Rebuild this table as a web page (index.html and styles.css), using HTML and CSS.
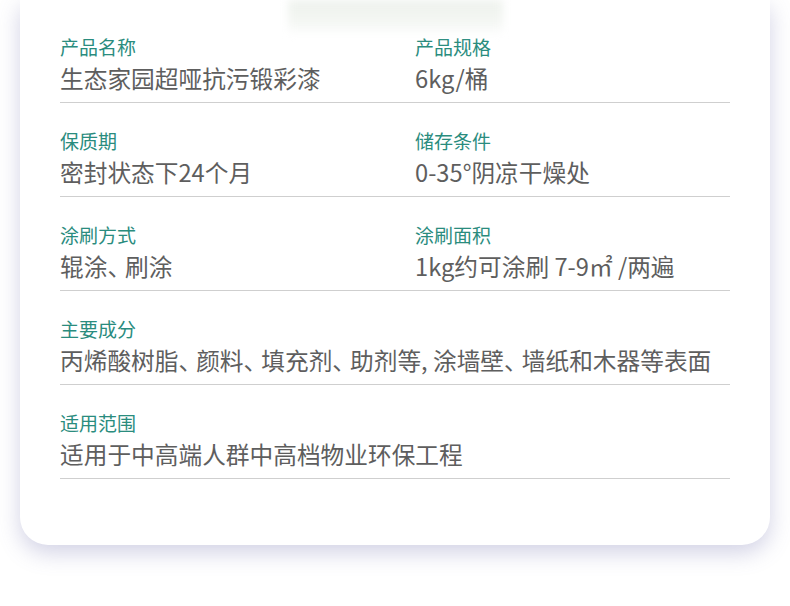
FILE: index.html
```html
<!DOCTYPE html>
<html lang="zh-CN">
<head>
<meta charset="utf-8">
<title>产品参数</title>
<link rel="stylesheet" href="styles.css">
</head>
<body>
<div class="page">
  <div class="card">
    <div class="hero"><div class="hero-img"></div></div>
    <div class="specs">
      <div class="row">
        <div class="cell">
          <div class="label">产品名称</div>
          <div class="value">生态家园超哑抗污锻彩漆</div>
        </div>
        <div class="cell">
          <div class="label">产品规格</div>
          <div class="value">6kg/桶</div>
        </div>
      </div>
      <div class="row">
        <div class="cell">
          <div class="label">保质期</div>
          <div class="value">密封状态下24个月</div>
        </div>
        <div class="cell">
          <div class="label">储存条件</div>
          <div class="value">0-35°阴凉干燥处</div>
        </div>
      </div>
      <div class="row">
        <div class="cell">
          <div class="label">涂刷方式</div>
          <div class="value">辊涂<span class="punct">、</span>刷涂</div>
        </div>
        <div class="cell">
          <div class="label">涂刷面积</div>
          <div class="value">1kg约可涂刷 7-9㎡ /两遍</div>
        </div>
      </div>
      <div class="row single">
        <div class="cell">
          <div class="label">主要成分</div>
          <div class="value">丙烯酸树脂<span class="punct">、</span>颜料<span class="punct">、</span>填充剂<span class="punct">、</span>助剂等, 涂墙壁<span class="punct">、</span>墙纸和木器等表面</div>
        </div>
      </div>
      <div class="row single">
        <div class="cell">
          <div class="label">适用范围</div>
          <div class="value">适用于中高端人群中高档物业环保工程</div>
        </div>
      </div>
    </div>
  </div>
</div>
</body>
</html>
```

FILE: styles.css
```css
html, body {
  margin: 0;
  padding: 0;
  background: #ffffff;
}

body {
  font-family: "Noto Sans CJK SC", "Noto Sans", sans-serif;
  width: 790px;
  height: 606px;
  overflow: hidden;
}

.page {
  padding: 0 20px;
}

.card {
  background: #ffffff;
  border-radius: 0 0 28px 28px;
  box-shadow: 0 8px 22px rgba(95, 95, 160, 0.28);
  padding: 0 40px 66px;
}

.hero {
  height: 34px;
  display: flex;
  justify-content: center;
}

.hero-img {
  width: 215px;
  height: 32px;
  background: linear-gradient(180deg, #eef2ed 0%, #f3f6f2 60%, #fbfcfb 100%);
  filter: blur(4px);
}

.specs {
  display: flex;
  flex-direction: column;
}

.row {
  display: grid;
  grid-template-columns: 355px 1fr;
  padding: 26px 0 8px;
  border-bottom: 1px solid #cfcfcf;
}

.row:first-child {
  padding-top: 1px;
}

.row.single {
  grid-template-columns: 1fr;
}

.cell {
  display: flex;
  flex-direction: column;
  gap: 4px;
}

.label {
  font-size: 19px;
  line-height: 24px;
  color: #2a8c7e;
}

.value {
  font-size: 23.7px;
  line-height: 31px;
  color: #5e5e5e;
  white-space: nowrap;
}

.punct {
  letter-spacing: -6px;
}
```
